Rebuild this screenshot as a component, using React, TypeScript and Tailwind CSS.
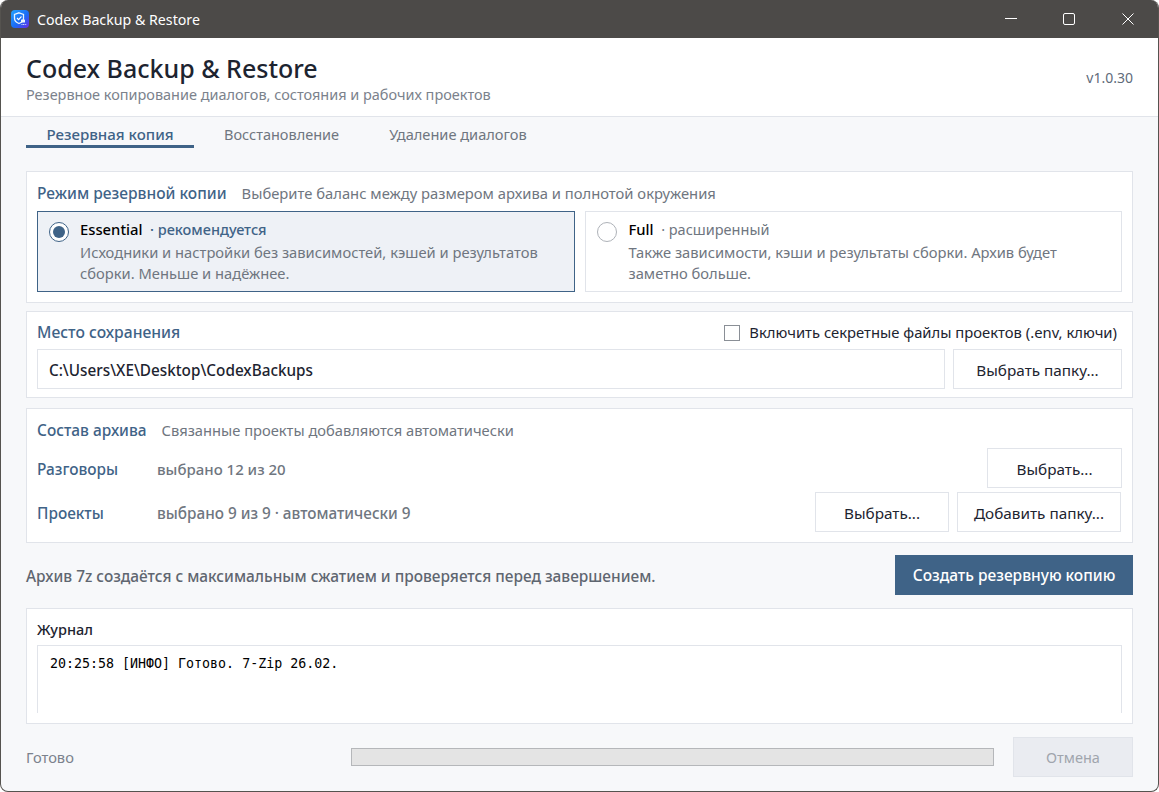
const tabs = ["Резервная копия", "Восстановление", "Удаление диалогов"];

function AppIcon() {
  return (
    <svg width="18" height="18" viewBox="0 0 18 18" className="shrink-0">
      <defs>
        <linearGradient id="ic" x1="0" y1="0" x2="1" y2="1">
          <stop offset="0" stopColor="#25a4ff" />
          <stop offset=".55" stopColor="#1a6cf5" />
          <stop offset="1" stopColor="#6a2be8" />
        </linearGradient>
      </defs>
      <rect width="18" height="18" rx="4" fill="url(#ic)" />
      <path d="M8 2.800l4.500 1.700v3.700c0 2.600-1.800 4.300-4.500 5.300-2.700-1-4.500-2.700-4.500-5.300V4.500z" fill="none" stroke="#e8f3ff" strokeWidth="1.300" />
      <path d="M6 8l1.600 1.600L10.500 6.500" fill="none" stroke="#fff" strokeWidth="1.100" />
      <rect x="10" y="9.500" width="4" height="3" rx=".6" fill="#e8f3ff" />
      <path d="M10.500 14.500h5" stroke="#dfe8ff" strokeWidth="1.200" strokeDasharray="1 .6" />
    </svg>
  );
}

function Radio({ checked }: { checked?: boolean }) {
  return (
    <span
      className={
        "mt-[2px] flex h-5 w-5 shrink-0 items-center justify-center rounded-full border-[1.5px] " +
        (checked ? "border-[#3f6387] bg-white" : "border-[#aeb2b8] bg-white")
      }
    >
      {checked && <span className="h-3 w-3 rounded-full bg-[#3f6387]" />}
    </span>
  );
}

function ModeOption({
  checked,
  title,
  note,
  lines,
}: {
  checked?: boolean;
  title: string;
  note: string;
  lines: string[];
}) {
  return (
    <div
      className={
        "flex h-[81px] flex-1 border pl-[11px] pt-[8px] " +
        (checked ? "gap-[11px] border-[#3f6387] bg-[#eef1f6]" : "gap-[12px] border-[#e1e4ea] bg-white")
      }
    >
      <Radio checked={checked} />
      <div>
        <div className="flex h-[22px] items-center whitespace-pre pb-[3px]">
          <span className="text-[14.800px] font-medium text-black">{title}</span>
          <span className={"text-[14.500px] " + (checked ? "font-medium text-[#3f6387]" : "text-[#6f7680]")}>{"  · " + note}</span>
        </div>
        {lines.map((line) => (
          <div key={line} className="h-[21px] whitespace-pre text-[14.720px] leading-[21px] text-[#6f7680]">
            {line}
          </div>
        ))}
      </div>
    </div>
  );
}

function OutlineButton({ label, className }: { label: string; className: string }) {
  return (
    <button className={"flex h-10 items-center justify-center border border-[#e1e4ea] bg-white pt-[2px] text-[15.300px] text-[#1d2430] " + className}>
      {label}
    </button>
  );
}

export default function App() {
  return (
    <div
      className="flex h-[792px] w-[1159px] flex-col overflow-hidden rounded-[8px] border-x border-b border-[#55534f] bg-[#f7f8fa]"
      style={{ fontFamily: '"Noto Sans", "Open Sans", sans-serif' }}
    >
      <div className="-mx-px flex h-[38px] shrink-0 items-center bg-[#4c4a48] pl-[11px] text-white">
        <AppIcon />
        <span className="ml-[8px] pt-[2px] text-[14.200px]">Codex Backup &amp; Restore</span>
        <div className="ml-auto flex items-center">
          <svg width="12" height="12" viewBox="0 0 12 12" className="mr-[46px]"><path d="M0 5.500h12" stroke="#fff" strokeWidth="1" /></svg>
          <svg width="12" height="12" viewBox="0 0 12 12" className="mr-[47px]"><rect x=".5" y=".5" width="11" height="11" rx="1.500" fill="none" stroke="#fff" /></svg>
          <svg width="12" height="12" viewBox="0 0 12 12" className="mr-[25px]"><path d="M.5.5l11 11M11.500.5l-11 11" stroke="#fff" /></svg>
        </div>
      </div>

      <header className="flex h-[79px] shrink-0 justify-between border-b border-[#e1e4ea] bg-white pl-[25px] pr-[25px]">
        <div>
          <h1 className="mt-[13px] text-[25px] font-medium leading-[34px] text-[#1d2430]">Codex Backup &amp; Restore</h1>
          <p className="text-[14.470px] leading-[20px] text-[#7b828c]">Резервное копирование диалогов, состояния и рабочих проектов</p>
        </div>
        <span className="mt-[30px] text-[14px] leading-[20px] text-[#5f6b7a]">v1.0.30</span>
      </header>

      <nav className="ml-[25px] flex h-[31px] shrink-0 items-start">
        {tabs.map((tab, i) => (
          <div
            key={tab}
            className={
              "flex h-[31px] items-start justify-center pt-[7px] leading-[20px] " +
              (i === 0
                ? "w-[168px] border-b-[3px] border-[#3f6387] text-[15.100px] font-medium text-[#3f6387]"
                : i === 1
                  ? "w-[175px] text-[14.500px] text-[#6f7680]"
                  : "w-[178px] text-[14.600px] text-[#6f7680]")
            }
          >
            {tab}
          </div>
        ))}
      </nav>

      <main className="mx-[25px] mt-[23px] flex flex-1 flex-col">
        <section className="h-[132px] border border-[#e1e4ea] bg-white px-[10px]">
          <div className="flex h-[39px] items-center gap-[15px] pt-[4px]">
            <span className="text-[15.550px] font-medium text-[#3f6387]">Режим резервной копии</span>
            <span className="text-[14.780px] text-[#6f7680]">Выберите баланс между размером архива и полнотой окружения</span>
          </div>
          <div className="flex gap-[10px]">
            <ModeOption
              checked
              title="Essential"
              note="рекомендуется"
              lines={["Исходники и настройки без зависимостей, кэшей и результатов", "сборки. Меньше и надёжнее."]}
            />
            <ModeOption
              title="Full"
              note="расширенный"
              lines={["Также зависимости, кэши и результаты сборки. Архив будет", "заметно больше."]}
            />
          </div>
        </section>

        <section className="mt-[8px] h-[87px] border border-[#e1e4ea] bg-white px-[10px]">
          <div className="flex h-[37px] items-center justify-between pt-[4px]">
            <span className="text-[15.700px] font-medium text-[#3f6387]">Место сохранения</span>
            <label className="mr-[5px] flex items-center gap-[9px] text-[14.800px] text-[#1d2430]">
              <span className="h-[16px] w-[16px] border border-[#8a8f96] bg-white" />
              Включить секретные файлы проектов (.env, ключи)
            </label>
          </div>
          <div className="flex gap-[8px]">
            <div className="flex h-10 flex-1 items-center border border-[#e1e4ea] pl-[11px] pt-[2px] text-[15.300px] font-medium text-[#1d2430]">
              C:\Users\XE\Desktop\CodexBackups
            </div>
            <OutlineButton label="Выбрать папку..." className="w-[169px]" />
          </div>
        </section>

        <section className="mt-[10px] h-[135px] border border-[#e1e4ea] bg-white pl-[10px] pr-[10px]">
          <div className="flex h-[39px] items-center gap-[15px] pt-[4px]">
            <span className="text-[15.450px] font-medium text-[#3f6387]">Состав архива</span>
            <span className="text-[14.700px] text-[#6f7680]">Связанные проекты добавляются автоматически</span>
          </div>
          <div className="flex h-[44px] items-start">
            <span className="mt-[10px] w-[120px] text-[15.400px] font-medium text-[#3f6387]">Разговоры</span>
            <span className="mt-[10px] text-[15px] font-medium text-[#6f7680]">выбрано 12 из 20</span>
            <OutlineButton label="Выбрать..." className="ml-auto w-[135px]" />
          </div>
          <div className="flex h-[44px] items-start">
            <span className="mt-[10px] w-[120px] text-[15.400px] font-medium text-[#3f6387]">Проекты</span>
            <span className="mt-[10px] text-[15.300px] font-medium text-[#6f7680]">выбрано 9 из 9 · автоматически 9</span>
            <OutlineButton label="Выбрать..." className="ml-auto w-[134px]" />
            <OutlineButton label="Добавить папку..." className="ml-[8px] mr-px w-[164px]" />
          </div>
        </section>

        <div className="mt-[12px] flex h-10 items-center justify-between">
          <span className="pt-[3px] text-[15.430px] font-medium text-[#5f6670]">Архив 7z создаётся с максимальным сжатием и проверяется перед завершением.</span>
          <button className="flex h-10 w-[238px] items-center justify-center bg-[#3f6387] pt-[2px] text-[15.500px] font-medium text-white">
            Создать резервную копию
          </button>
        </div>

        <section className="mt-[13px] h-[116px] border border-[#e1e4ea] bg-white px-[10px]">
          <div className="flex h-[36px] items-center pt-[6px] text-[14.500px] font-medium text-[#1d2430]">Журнал</div>
          <div className="h-[68px] border-x border-t border-[#e1e4ea] pl-[12px] pt-[9px] text-[13.300px] leading-[18px] text-black" style={{ fontFamily: '"DejaVu Sans Mono", monospace' }}>
            20:25:58 [ИНФО] Готово. 7-Zip 26.02.
          </div>
        </section>

        <div className="mt-[13px] flex h-10 items-center">
          <span className="w-[325px] text-[14.700px] text-[#7b828c]">Готово</span>
          <div className="h-[18px] w-[643px] border border-[#b5b7ba] bg-[#e4e4e4]" />
          <button className="ml-auto flex h-10 w-[120px] items-center justify-center border border-[#e1e4ea] bg-[#eaecf1] pt-[2px] text-[14.500px] text-[#a0a5ad]">
            Отмена
          </button>
        </div>
      </main>
    </div>
  );
}
